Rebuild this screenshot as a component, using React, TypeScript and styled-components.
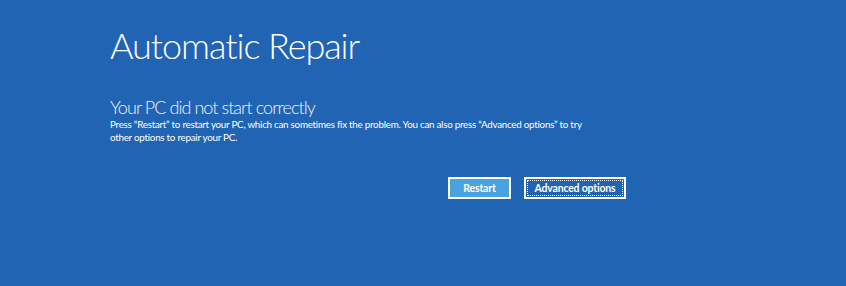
import React from 'react';
import styled, {createGlobalStyle} from "styled-components";

const GlobalStyle = createGlobalStyle`
  html, body {
    margin: 0;
    padding: 0;
    background: #2164b4;
  }
  body {
    font-family: Lato, "Open Sans", sans-serif;
    color: #ffffff;
  }
`

const Screen = styled.main`
  width: 846px;
  height: 286px;
  background: #2164b4;
  box-sizing: border-box;
  padding: 22px 0 0 110px;
  overflow: hidden;
`

const Content = styled.section`
  width: 516px;
  display: flex;
  flex-direction: column;
`

const Title = styled.h1`
  margin: 0;
  font-size: 36px;
  font-weight: 300;
  line-height: 46px;
  letter-spacing: -1.05px;
`

const Subtitle = styled.h2`
  margin: 28px 0 0;
  font-size: 18px;
  font-weight: 300;
  line-height: 22px;
  letter-spacing: -0.95px;
  color: #eef3fa;
`

const Message = styled.p`
  margin: 0;
  width: 472px;
  font-size: 9.8px;
  line-height: 13px;
  letter-spacing: -0.25px;
`

const Actions = styled.div`
  display: flex;
  justify-content: flex-end;
  gap: 13px;
  margin-top: 33px;
`

const Button = styled.button<{ $primary?: boolean }>`
  box-sizing: border-box;
  height: 22px;
  padding: 0 6px;
  border: 2px solid #ffffff;
  background: ${props => props.$primary ? "#4aa3e0" : "#2164b4"};
  color: #ffffff;
  font-family: Lato, "Open Sans", sans-serif;
  font-size: 10.5px;
  font-weight: 700;
  letter-spacing: -0.2px;
  white-space: nowrap;
  cursor: pointer;
  outline: ${props => props.$primary ? "none" : "1px dotted #ffffff"};
  outline-offset: -4px;
`

export default function App() {
    return (
        <>
            <GlobalStyle/>
            <Screen>
                <Content>
                    <Title>Automatic Repair</Title>
                    <Subtitle>Your PC did not start correctly</Subtitle>
                    <Message>
                        Press “Restart” to restart your PC, which can sometimes fix the problem. You can also press
                        “Advanced options” to try other options to repair your PC.
                    </Message>
                    <Actions>
                        <Button $primary style={{width: 63}}>Restart</Button>
                        <Button style={{width: 102}}>Advanced options</Button>
                    </Actions>
                </Content>
            </Screen>
        </>
    );
}
